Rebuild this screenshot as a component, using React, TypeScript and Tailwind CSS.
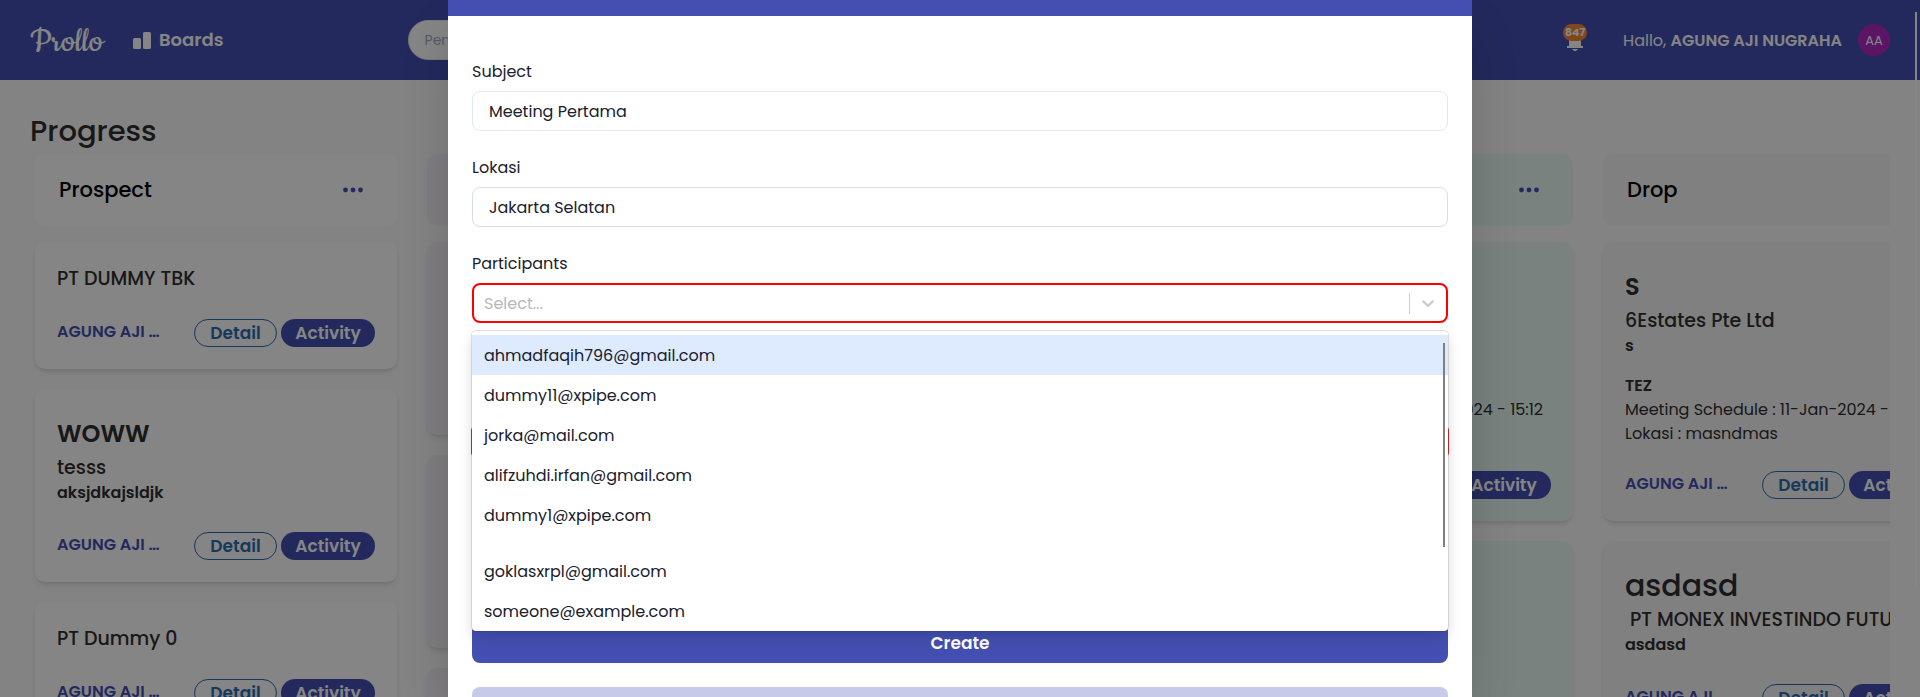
import { ReactNode } from "react";

type Visit = { title: string; schedule: string; place: string };
type Item = { big?: string; bigClass?: string; company: string; note?: string; visit?: Visit };
type Board = { title: string; tone: string; items: Item[] };

const boards: Board[] = [
  {
    title: "Prospect",
    tone: "bg-white",
    items: [
      { company: "PT DUMMY TBK" },
      { big: "WOWW", bigClass: "text-2xl font-semibold", company: "tesss", note: "aksjdkajsldjk" },
      { company: "PT Dummy 0" },
    ],
  },
  {
    title: "",
    tone: "bg-[#f5eff9]",
    items: [
      { big: "\u00a0", company: "\u00a0", note: "\u00a0" },
      { big: "\u00a0", company: "\u00a0", note: "\u00a0" },
      { big: "\u00a0", company: "\u00a0", note: "\u00a0" },
    ],
  },
  { title: "", tone: "bg-white", items: [] },
  {
    title: "",
    tone: "bg-[#e8faf3]",
    items: [
      {
        big: "\u00a0",
        company: "\u00a0",
        note: "\u00a0",
        visit: { title: "\u00a0", schedule: "20-Jan-2024 - 15:12", place: "\u00a0" },
      },
      {
        big: "\u00a0",
        company: "PT MONEX INVESTINDO F...",
        note: "\u00a0",
        visit: { title: "\u00a0", schedule: "\u00a0", place: "\u00a0" },
      },
    ],
  },
  {
    title: "Drop",
    tone: "bg-[#f6f6f6]",
    items: [
      {
        big: "S",
        bigClass: "text-2xl font-semibold",
        company: "6Estates Pte Ltd",
        note: "s",
        visit: { title: "TEZ", schedule: "11-Jan-2024 - 15:12", place: "masndmas" },
      },
      { big: "asdasd", bigClass: "text-[30px] font-medium", company: "\u00a0PT MONEX INVESTINDO FUTURES", note: "asdasd" },
    ],
  },
];

const emails = [
  "ahmadfaqih796@gmail.com",
  "dummy11@xpipe.com",
  "jorka@mail.com",
  "alifzuhdi.irfan@gmail.com",
  "dummy1@xpipe.com",
  "",
  "goklasxrpl@gmail.com",
  "someone@example.com",
];

function Card({ item, tone }: { item: Item; tone: string }) {
  return (
    <article className={`${tone} whitespace-nowrap rounded-[10px] p-[22px] text-[#2f2f2f] shadow-md`}>
      {item.big && <h3 className={`pb-[2px] pt-[5px] leading-[35px] ${item.bigClass ?? ""}`}>{item.big}</h3>}
      <p className="h-7 pt-px text-[19px] font-medium leading-7">{item.company}</p>
      {item.note && <p className="text-base font-semibold leading-6">{item.note}</p>}
      {item.visit && (
        <div className="mt-4 text-base leading-6">
          <p className="font-semibold">{item.visit.title}</p>
          <p>Meeting Schedule : {item.visit.schedule}</p>
          <p>Lokasi : {item.visit.place}</p>
        </div>
      )}
      <div className={`flex items-start justify-between ${item.visit ? "mt-[25px]" : "mt-[27px]"}`}>
        <span className="pt-px text-base font-semibold leading-6 text-[#4350b1]">AGUNG AJI …</span>
        <div className="flex shrink-0 gap-1">
          <button className="h-7 w-[83px] rounded-full border border-[#2b6cb0] text-[17px] font-semibold leading-6 text-[#2b6cb0]">
            Detail
          </button>
          <button className="h-7 w-[94px] rounded-full bg-[#4350b1] text-[17px] font-semibold leading-6 text-white">
            Activity
          </button>
        </div>
      </div>
    </article>
  );
}

function Column({ title, tone, children }: { title: string; tone: string; children: ReactNode }) {
  return (
    <section className="w-[362px] shrink-0">
      <header className={`${tone} mb-4 flex h-[72px] items-center justify-between rounded-[10px] px-6`}>
        <h2 className="text-[21px] font-medium text-black">{title}</h2>
        <button aria-label="Column menu" className="mr-2 text-[#4350b1]">
          <svg width="24" height="24" viewBox="0 0 24 24" fill="currentColor">
            <circle cx="4.500" cy="12" r="2.400" />
            <circle cx="12" cy="12" r="2.400" />
            <circle cx="19.500" cy="12" r="2.400" />
          </svg>
        </button>
      </header>
      <div className="flex flex-col gap-5">{children}</div>
    </section>
  );
}

function NavBar() {
  return (
    <nav className="flex h-20 items-center bg-[#4350b1] px-[30px] text-white">
      <a href="#" className="w-[103px] pt-1 font-[Cookie,cursive] text-[39px] leading-10">
        Prollo
      </a>
      <a href="#" className="flex items-center gap-2 text-lg font-semibold">
        <svg width="18" height="17" viewBox="0 0 18 17" fill="currentColor">
          <rect y="6" width="8" height="11" rx="1.500" />
          <rect x="10" width="8" height="17" rx="1.500" />
        </svg>
        Boards
      </a>
      <input
        aria-label="Search"
        placeholder="Pencarian"
        className="ml-[184px] h-10 w-[480px] rounded-full border border-[#e2e8f0] bg-white px-4 text-sm placeholder:text-[#a0aec0]"
      />
      <div className="ml-auto flex items-center">
        <button aria-label="Notifications" className="relative mr-10 block h-6 w-4">
          <svg width="16" height="24" viewBox="0 0 16 24" fill="currentColor">
            <path d="M2 10a6 6 0 0 1 12 0v8h2v2H0v-2h2zM5 21h6l-2 2H7z" />
          </svg>
          <span className="absolute -left-1 -top-1 grid h-[17px] w-6 place-items-center rounded-full bg-[#f58a33] text-[11px] font-bold leading-none">
            847
          </span>
        </button>
        <p className="mr-4 pt-px text-base">
          Hallo, <b className="font-semibold">AGUNG AJI NUGRAHA</b>
        </p>
        <span className="grid h-8 w-8 place-items-center rounded-full bg-[#b02ac0] pt-px text-[13px]">AA</span>
      </div>
    </nav>
  );
}

function MeetingDialog() {
  const label = "mb-2 block h-6 pt-px leading-6";
  return (
    <div
      role="dialog"
      aria-label="Create meeting"
      className="min-h-screen w-[1024px] max-w-full bg-white text-base text-[#1a202c] shadow-2xl"
    >
      <div className="h-4 bg-[#4350b1]" />
      <form className="px-6 pt-[43px]">
        <label htmlFor="subject" className={label}>Subject</label>
        <input
          id="subject"
          defaultValue="Meeting Pertama"
          className="mb-6 block h-10 w-full rounded-lg border border-[#e2e8f0] px-4"
        />
        <label htmlFor="lokasi" className={label}>Lokasi</label>
        <input
          id="lokasi"
          defaultValue="Jakarta Selatan"
          className="mb-6 block h-10 w-full rounded-lg border border-[#d8dcec] px-4"
        />
        <label htmlFor="participants" className={label}>Participants</label>
        <div className="relative">
          <div className="flex h-10 items-center rounded-lg border-2 border-[#ff0000] pl-[10px]">
            <input
              id="participants"
              placeholder="Select..."
              className="min-w-0 flex-1 pt-px outline-none placeholder:text-[#b8b8b8]"
            />
            <span className="h-[21px] w-px bg-[#cccccc]" />
            <svg className="mx-2 text-[#cccccc]" width="20" height="20" viewBox="0 0 20 20" fill="currentColor">
              <path d="M4.516 7.548c0.436-0.446 1.043-0.481 1.576 0l3.908 3.747 3.908-3.747c0.533-0.481 1.141-0.446 1.574 0 0.436 0.445 0.408 1.197 0 1.615-0.406 0.418-4.695 4.502-4.695 4.502-0.217 0.223-0.502 0.335-0.787 0.335s-0.570-0.112-0.789-0.335c0 0-4.287-4.084-4.695-4.502s-0.436-1.170 0-1.615z" />
            </svg>
          </div>
          <div className="absolute inset-x-0 top-12 z-10 rounded bg-white py-1 shadow-[0_0_0_1px_rgba(0,0,0,0.1),0_4px_11px_rgba(0,0,0,0.1),0_10px_20px_rgba(0,0,0,0.06)]">
            <ul className="h-[292px] overflow-hidden">
              {emails.map((email, i) => (
                <li
                  key={email}
                  className={`px-3 leading-6 ${email ? "pb-[7px] pt-[9px]" : "h-4"} ${i === 0 ? "bg-[#deebff]" : ""}`}
                >
                  {email}
                </li>
              ))}
            </ul>
            <span className="absolute right-[3px] top-3 h-[204px] w-0.5 bg-[#808080]" />
          </div>
        </div>
        <div className="-mx-px mt-[103px] h-[31px] rounded border border-[#e02f2f]" />
        <button
          type="submit"
          className="mt-[166px] block h-10 w-full rounded-lg bg-[#4350b1] pt-px text-[17px] font-semibold text-white"
        >
          Create
        </button>
        <button
          type="button"
          aria-label="Close dialog"
          className="mt-6 block h-10 w-full rounded-lg bg-[#c7cae8]"
        />
      </form>
    </div>
  );
}

export default function App() {
  return (
    <div className="relative h-screen overflow-hidden bg-[#fcfcfc] font-[Poppins,Inter,sans-serif]">
      <NavBar />
      <main className="mx-[30px] overflow-hidden pt-8">
        <h1 className="mb-[5px] pt-px text-[29px] font-medium leading-9 text-[#2f2f2f]">Progress</h1>
        <div className="flex gap-[30px] pl-[5px]">
          {boards.map((board, i) => (
            <Column key={i} title={board.title} tone={board.tone}>
              {board.items.map((item, k) => (
                <Card key={k} item={item} tone={board.tone} />
              ))}
            </Column>
          ))}
        </div>
      </main>
      <span className="absolute right-[3px] top-3 h-[576px] w-0.5 bg-white" />
      <div className="absolute inset-0 flex justify-center bg-black/48">
        <MeetingDialog />
      </div>
    </div>
  );
}
